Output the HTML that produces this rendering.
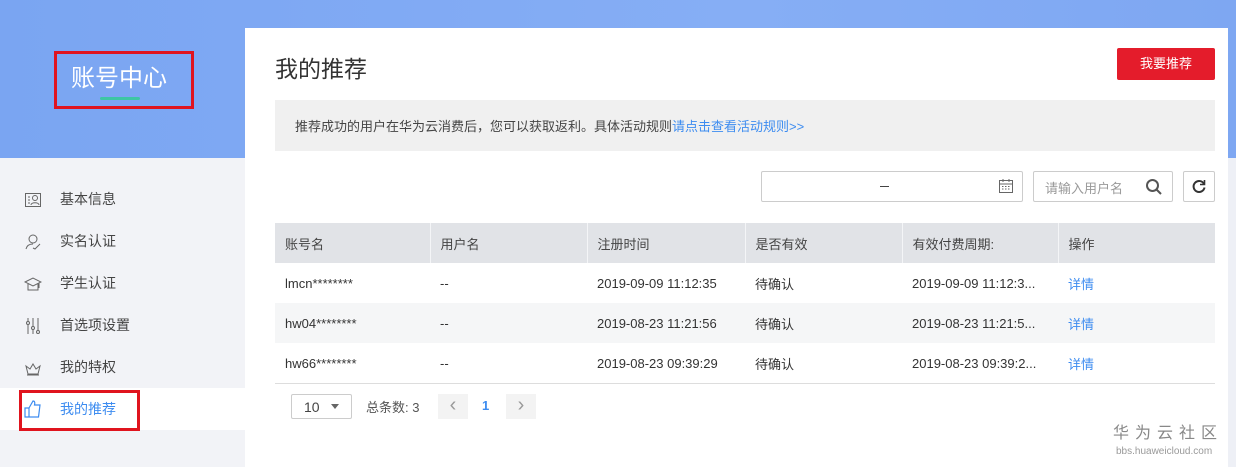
<!DOCTYPE html>
<html><head><meta charset="utf-8"><style>
*{margin:0;padding:0;box-sizing:border-box}
body{width:1236px;height:467px;overflow:hidden;position:relative;background:#eef0f6;font-family:"Liberation Sans","Noto Sans CJK SC",sans-serif;font-size:13px;color:#333}
.abs{position:absolute}
.top{left:0;top:0;width:1236px;height:158px;background:linear-gradient(90deg,#7aa5f2,#86aef5 60%,#7ea7f2)}
.card{left:245px;top:28px;width:983px;height:439px;background:#fff}
.menu{left:0;top:158px;width:245px;height:309px;background:#f2f3f7}
.mi{position:absolute;left:60px;font-size:14px;color:#444}
.ic{position:absolute;left:24px;width:18px;height:18px}
td,th{font-weight:normal;text-align:left;padding-left:10px;height:40px;font-size:13px;white-space:nowrap;overflow:hidden}
table{border-collapse:collapse;table-layout:fixed}
th{background:#e1e3e7;color:#444;border-left:1px solid #f4f5f7}
th:first-child{border-left:none}
tr.g td{background:#f5f6f7}
a{color:#3d8cf0;text-decoration:none}
</style></head><body>
<div class="abs top"></div>
<div class="abs menu"></div>
<div class="abs" style="left:0;top:388px;width:245px;height:42px;background:#fff"></div>
<div class="abs" style="left:54px;top:51px;width:140px;height:58px;border:3px solid #e0141e"></div>
<div class="abs" style="left:71px;top:58px;color:#fff;font-size:24px;letter-spacing:0px">账号中心</div>
<div class="abs" style="left:100px;top:97px;width:40px;height:3px;background:#3dc6a4;border-radius:2px"></div>

<svg class="ic" style="top:191px" viewBox="0 0 18 18" fill="none" stroke="#666" stroke-width="1"><rect x="1.5" y="2.5" width="15" height="13"/><circle cx="11" cy="7" r="2.5"/><path d="M7 14c0-3 8-3 8 0M4 6h2M4 9h2M4 12h2"/></svg>
<div class="mi" style="top:189px">基本信息</div>
<svg class="ic" style="top:233px" viewBox="0 0 18 18" fill="none" stroke="#666" stroke-width="1"><circle cx="9" cy="6" r="4"/><path d="M2 16c1-4 4-5 7-5M9 15l2 1 5-5"/></svg>
<div class="mi" style="top:231px">实名认证</div>
<svg class="ic" style="top:275px" viewBox="0 0 18 18" fill="none" stroke="#666" stroke-width="1"><path d="M1 7l8-4 8 4-8 4zM4 9v6h10V9M15 8v5"/></svg>
<div class="mi" style="top:273px">学生认证</div>
<svg class="ic" style="top:317px" viewBox="0 0 18 18" fill="none" stroke="#666" stroke-width="1"><path d="M4 1v16M9 1v16M14 1v16"/><circle cx="4" cy="6" r="1.5" fill="#f2f3f7"/><circle cx="9" cy="11" r="1.5" fill="#f2f3f7"/><circle cx="14" cy="15" r="1.5" fill="#f2f3f7"/></svg>
<div class="mi" style="top:315px">首选项设置</div>
<svg class="ic" style="top:359px" viewBox="0 0 18 18" fill="none" stroke="#666" stroke-width="1"><path d="M2 7l4 3 3-5 3 5 4-3-2 8H4zM3 16h12"/></svg>
<div class="mi" style="top:357px">我的特权</div>
<div class="abs" style="left:19px;top:390px;width:121px;height:41px;border:3px solid #e0141e"></div>
<svg class="ic" style="top:400px" viewBox="0 0 18 18" fill="none" stroke="#3d8cf0" stroke-width="1.2"><path d="M1 8h4v9H1zM5 8l4-7c2 0 2 2 1.5 4H16l-1.5 12H5"/></svg>
<div class="mi" style="top:399px;color:#3d8cf0">我的推荐</div>

<div class="abs card"></div>
<div class="abs" style="left:275px;top:50px;font-size:23px;color:#333">我的推荐</div>
<div class="abs" style="left:1117px;top:48px;width:98px;height:32px;background:#e41c2b;color:#fff;border-radius:2px;text-align:center;line-height:32px;font-size:13px">我要推荐</div>
<div class="abs" style="left:275px;top:100px;width:940px;height:51px;background:#f0f0f0;padding:16px 0 0 20px;font-size:13px;color:#444">推荐成功的用户在华为云消费后，您可以获取返利。具体活动规则<a>请点击查看活动规则&gt;&gt;</a></div>

<div class="abs" style="left:761px;top:171px;width:262px;height:31px;border:1px solid #ccc;border-radius:2px"></div>
<div class="abs" style="left:880px;top:186px;width:9px;height:1px;background:#444"></div>
<svg class="abs" style="left:998px;top:178px" width="16" height="16" viewBox="0 0 16 16" fill="none" stroke="#666"><rect x="1.5" y="2.5" width="13" height="12"/><path d="M1.5 6h13M5 1v3M11 1v3"/><path d="M4 8.5h8M4 11h8" stroke-dasharray="1.5 1.5"/></svg>
<div class="abs" style="left:1033px;top:171px;width:140px;height:31px;border:1px solid #ccc;border-radius:2px;padding:6px 0 0 11px;color:#999;font-size:13px">请输入用户名</div>
<svg class="abs" style="left:1145px;top:178px" width="18" height="18" viewBox="0 0 18 18" fill="none" stroke="#555" stroke-width="2"><circle cx="7.5" cy="7.5" r="5.5"/><path d="M11.5 11.5l4.5 4.5"/></svg>
<div class="abs" style="left:1183px;top:171px;width:32px;height:31px;border:1px solid #ccc;border-radius:2px"></div>
<svg class="abs" style="left:1191px;top:178px" width="16" height="16" viewBox="0 0 16 16" fill="none" stroke="#333" stroke-width="2"><path d="M13 6A5.5 5.5 0 1 0 13.5 9.5"/><path d="M13.5 2v4.5H9" stroke-width="1.6"/></svg>

<table class="abs" style="left:275px;top:223px;width:940px">
<colgroup><col style="width:155px"><col style="width:157px"><col style="width:158px"><col style="width:157px"><col style="width:156px"><col style="width:157px"></colgroup>
<tr><th>账号名</th><th>用户名</th><th>注册时间</th><th>是否有效</th><th>有效付费周期:</th><th>操作</th></tr>
<tr><td>lmcn********</td><td>--</td><td>2019-09-09 11:12:35</td><td>待确认</td><td>2019-09-09 11:12:3...</td><td><a>详情</a></td></tr>
<tr class="g"><td>hw04********</td><td>--</td><td>2019-08-23 11:21:56</td><td>待确认</td><td>2019-08-23 11:21:5...</td><td><a>详情</a></td></tr>
<tr><td>hw66********</td><td>--</td><td>2019-08-23 09:39:29</td><td>待确认</td><td>2019-08-23 09:39:2...</td><td><a>详情</a></td></tr>
</table>
<div class="abs" style="left:275px;top:383px;width:940px;height:1px;background:#ddd"></div>

<div class="abs" style="left:291px;top:394px;width:61px;height:25px;border:1px solid #ccc;border-radius:2px;padding:4px 0 0 12px;font-size:14px;color:#444">10</div>
<div class="abs" style="left:331px;top:404px;width:0;height:0;border-left:4px solid transparent;border-right:4px solid transparent;border-top:5px solid #666"></div>
<div class="abs" style="left:366px;top:397px;color:#555">总条数: 3</div>
<div class="abs" style="left:438px;top:394px;width:30px;height:25px;background:#f3f3f3;color:#999;text-align:center;line-height:22px;font-size:20px">&lsaquo;</div>
<div class="abs" style="left:482px;top:398px;color:#3d8cf0;font-weight:bold">1</div>
<div class="abs" style="left:506px;top:394px;width:30px;height:25px;background:#f3f3f3;color:#999;text-align:center;line-height:22px;font-size:20px">&rsaquo;</div>

<div class="abs" style="left:1113px;top:425px;font-size:16px;line-height:18px;color:#888;letter-spacing:6px">华为云社区</div>
<div class="abs" style="left:1116px;top:446px;font-size:10px;line-height:11px;color:#999">bbs.huaweicloud.com</div>
</body></html>
